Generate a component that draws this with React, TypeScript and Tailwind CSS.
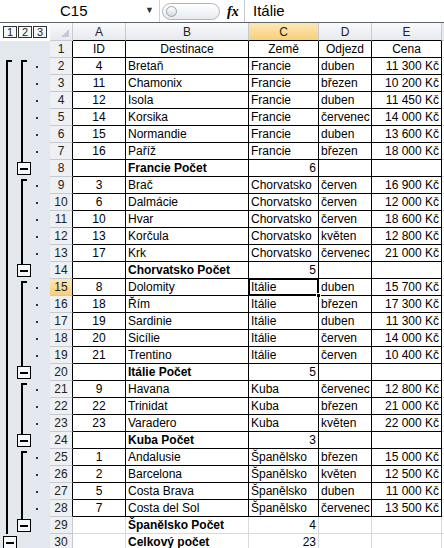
import React from 'react';

type Kind = 'head' | 'detail' | 'summary' | 'total';

type Row = {
  n: number;
  kind: Kind;
  id?: string;
  dest?: string;
  land?: string;
  month?: string;
  price?: string;
  count?: string;
};

const rows: Row[] = [
  { n: 1, kind: 'head' },
  { n: 2, kind: 'detail', id: '4', dest: 'Bretaň', land: 'Francie', month: 'duben', price: '11 300 Kč' },
  { n: 3, kind: 'detail', id: '11', dest: 'Chamonix', land: 'Francie', month: 'březen', price: '10 200 Kč' },
  { n: 4, kind: 'detail', id: '12', dest: 'Isola', land: 'Francie', month: 'duben', price: '11 450 Kč' },
  { n: 5, kind: 'detail', id: '14', dest: 'Korsika', land: 'Francie', month: 'červenec', price: '14 000 Kč' },
  { n: 6, kind: 'detail', id: '15', dest: 'Normandie', land: 'Francie', month: 'duben', price: '13 600 Kč' },
  { n: 7, kind: 'detail', id: '16', dest: 'Paříž', land: 'Francie', month: 'březen', price: '18 000 Kč' },
  { n: 8, kind: 'summary', dest: 'Francie Počet', count: '6' },
  { n: 9, kind: 'detail', id: '3', dest: 'Brač', land: 'Chorvatsko', month: 'červen', price: '16 900 Kč' },
  { n: 10, kind: 'detail', id: '6', dest: 'Dalmácie', land: 'Chorvatsko', month: 'červen', price: '12 000 Kč' },
  { n: 11, kind: 'detail', id: '10', dest: 'Hvar', land: 'Chorvatsko', month: 'červen', price: '18 600 Kč' },
  { n: 12, kind: 'detail', id: '13', dest: 'Korčula', land: 'Chorvatsko', month: 'květen', price: '12 800 Kč' },
  { n: 13, kind: 'detail', id: '17', dest: 'Krk', land: 'Chorvatsko', month: 'červenec', price: '21 000 Kč' },
  { n: 14, kind: 'summary', dest: 'Chorvatsko Počet', count: '5' },
  { n: 15, kind: 'detail', id: '8', dest: 'Dolomity', land: 'Itálie', month: 'duben', price: '15 700 Kč' },
  { n: 16, kind: 'detail', id: '18', dest: 'Řím', land: 'Itálie', month: 'březen', price: '17 300 Kč' },
  { n: 17, kind: 'detail', id: '19', dest: 'Sardinie', land: 'Itálie', month: 'duben', price: '11 300 Kč' },
  { n: 18, kind: 'detail', id: '20', dest: 'Sicílie', land: 'Itálie', month: 'červen', price: '14 000 Kč' },
  { n: 19, kind: 'detail', id: '21', dest: 'Trentino', land: 'Itálie', month: 'červen', price: '10 400 Kč' },
  { n: 20, kind: 'summary', dest: 'Itálie Počet', count: '5' },
  { n: 21, kind: 'detail', id: '9', dest: 'Havana', land: 'Kuba', month: 'červenec', price: '12 800 Kč' },
  { n: 22, kind: 'detail', id: '22', dest: 'Trinidat', land: 'Kuba', month: 'březen', price: '21 000 Kč' },
  { n: 23, kind: 'detail', id: '23', dest: 'Varadero', land: 'Kuba', month: 'květen', price: '22 000 Kč' },
  { n: 24, kind: 'summary', dest: 'Kuba Počet', count: '3' },
  { n: 25, kind: 'detail', id: '1', dest: 'Andalusie', land: 'Španělsko', month: 'březen', price: '15 000 Kč' },
  { n: 26, kind: 'detail', id: '2', dest: 'Barcelona', land: 'Španělsko', month: 'květen', price: '12 500 Kč' },
  { n: 27, kind: 'detail', id: '5', dest: 'Costa Brava', land: 'Španělsko', month: 'duben', price: '11 000 Kč' },
  { n: 28, kind: 'detail', id: '7', dest: 'Costa del Sol', land: 'Španělsko', month: 'červenec', price: '13 500 Kč' },
  { n: 29, kind: 'summary', dest: 'Španělsko Počet', count: '4' },
  { n: 30, kind: 'total', dest: 'Celkový počet', count: '23' },
];

const groupStarts = [2, 9, 15, 21, 25];

// outline symbols for one row of the gutter
function Outline({ row }: { row: Row }) {
  const n = row.n;
  const l1 = n === 1 ? null : n === 2 ? 'start' : n === 30 ? 'box' : 'line';
  const l2 =
    row.kind === 'detail' ? (groupStarts.includes(n) ? 'start' : 'line') : row.kind === 'summary' ? 'box' : null;

  const seg = (x: number, kind: string | null, bx: number) => {
    if (!kind) return null;
    if (kind === 'start')
      return (
        <g>
          <rect x={x} y={2} width={2} height={15} fill="#000" />
          <rect x={x} y={2} width={6} height={2} fill="#000" />
        </g>
      );
    if (kind === 'line') return <rect x={x} y={0} width={2} height={17} fill="#000" />;
    return (
      <g>
        {bx > 10 && <rect x={x} y={0} width={2} height={2} fill="#000" />}
        <rect x={bx + 0.5} y={2.5} width={13} height={12} fill="#f5f7fa" stroke="#000" />
        <rect x={bx + 3} y={8} width={8} height={2} fill="#000" />
      </g>
    );
  };

  return (
    <svg width="50" height="17" className="block shrink-0">
      {seg(6, l1, 3)}
      {seg(21, l2, 17)}
      {row.kind === 'detail' && <rect x={36} y={8} width={2} height={2} fill="#333" />}
    </svg>
  );
}

function ColHead({ label, w, active }: { label: string; w: string; active?: boolean }) {
  return (
    <div
      className={`${w} flex shrink-0 items-center justify-center border-r border-b border-r-[#c5cad2] border-b-black ${
        active ? 'bg-gradient-to-b from-[#fde9b4] to-[#f7cf79]' : 'bg-gradient-to-b from-[#f9fafb] to-[#e6e9ee]'
      }`}
    >
      {label}
    </div>
  );
}

export default function App() {
  return (
    <div
      className="flex h-[548px] w-[444px] flex-col overflow-hidden bg-white text-[12px] text-black"
      style={{ fontFamily: '"Liberation Sans", Arial, sans-serif' }}
    >
      {/* formula bar */}
      <div className="flex h-[22px] shrink-0 items-center bg-white">
        <div className="relative flex h-full w-[160px] items-center border-r border-[#d0d4da]">
          <span className="ml-[60px] text-[15px]">C15</span>
          <span className="absolute right-[5px] top-[4px] text-[9px] text-[#333]">▼</span>
        </div>
        <div className="ml-[2px] flex h-[17px] w-[58px] items-center rounded-full border border-[#aeb4bd] bg-gradient-to-b from-white to-[#e8ebef] px-[3px]">
          <div className="h-[11px] w-[11px] rounded-full border border-[#9aa1ab] bg-gradient-to-b from-white to-[#d6dae0]" />
        </div>
        <div className="ml-[7px] flex h-full w-[18px] items-center border-r border-[#c5cad2]">
          <span
            className="text-[14px] font-bold italic"
            style={{ fontFamily: '"Liberation Serif", serif' }}
          >
            fx
          </span>
        </div>
        <span className="ml-[8px] text-[15px]">Itálie</span>
      </div>
      <div className="h-px shrink-0 bg-[#5f6368]" />

      {/* column header row */}
      <div className="flex h-[18px] shrink-0 text-[#222]">
        <div className="flex w-[50px] shrink-0 items-start gap-px bg-white pl-[3px] pt-[3px]">
          {['1', '2', '3'].map((l) => (
            <div
              key={l}
              className="flex h-[12px] w-[14px] items-center justify-center border border-[#333] bg-[#f7f8fa] text-[11px] leading-none"
            >
              {l}
            </div>
          ))}
        </div>
        <div className="relative w-[23px] shrink-0 border-r border-b border-[#c5cad2] bg-gradient-to-b from-[#f9fafb] to-[#e6e9ee]">
          <svg width="8" height="8" className="absolute bottom-[3px] right-[3px]">
            <polygon points="8,0 8,8 0,8" fill="#c4c9d0" />
          </svg>
        </div>
        <ColHead label="A" w="w-[53px]" />
        <ColHead label="B" w="w-[123px]" />
        <ColHead label="C" w="w-[70px]" active />
        <ColHead label="D" w="w-[53px]" />
        <ColHead label="E" w="w-[70px]" />
        <div className="flex-1 border-b border-[#c5cad2] bg-[#e6e9ee]" />
      </div>

      {/* rows */}
      <div className="flex flex-col">
        {rows.map((r) => {
          const inTable = r.n <= 28;
          const bc = inTable ? 'border-black' : 'border-[#d6dae0]';
          const cell = `flex h-full shrink-0 items-center border-r border-b ${bc} overflow-hidden whitespace-nowrap`;
          const sel = r.n === 15;
          return (
            <div key={r.n} className="flex h-[17px] shrink-0">
              <div className="w-[50px] shrink-0 bg-[#e3e7ee]">
                <Outline row={r} />
              </div>
              <div
                className={`flex h-full w-[23px] shrink-0 items-center justify-center border-b border-r border-b-[#c5cad2] ${
                  inTable ? 'border-r-black' : 'border-r-[#c5cad2]'
                } ${sel ? 'bg-gradient-to-b from-[#fde9b4] to-[#f7cf79]' : 'bg-[#eef0f3]'} text-[#222]`}
              >
                {r.n}
              </div>
              {r.kind === 'head' ? (
                <>
                  <div className={`${cell} w-[53px] justify-center`}>ID</div>
                  <div className={`${cell} w-[123px] justify-center`}>Destinace</div>
                  <div className={`${cell} w-[70px] justify-center`}>Země</div>
                  <div className={`${cell} w-[53px] justify-center`}>Odjezd</div>
                  <div className={`${cell} w-[70px] justify-center`}>Cena</div>
                </>
              ) : r.kind === 'detail' ? (
                <>
                  <div className={`${cell} w-[53px] justify-center`}>{r.id}</div>
                  <div className={`${cell} w-[123px] pl-[2px]`}>{r.dest}</div>
                  <div className={`${cell} relative w-[70px] overflow-visible pl-[2px]`}>
                    {r.land}
                    {sel && (
                      <>
                        <div className="absolute -left-px -top-px bottom-[-1px] right-[-1px] border-2 border-black" />
                        <div className="absolute -bottom-[3px] -right-[3px] h-[5px] w-[5px] border border-white bg-black" />
                      </>
                    )}
                  </div>
                  <div className={`${cell} w-[53px] pl-[2px]`}>{r.month}</div>
                  <div className={`${cell} w-[70px] justify-end pr-[2px]`}>{r.price}</div>
                </>
              ) : (
                <>
                  <div className={`${cell} w-[53px]`} />
                  <div className={`${cell} w-[123px] pl-[2px] font-bold`}>{r.dest}</div>
                  <div className={`${cell} w-[70px] justify-end pr-[2px]`}>{r.count}</div>
                  <div className={`${cell} w-[53px]`} />
                  <div className={`${cell} w-[70px]`} />
                </>
              )}
              <div className="flex-1 border-b border-[#d6dae0]" />
            </div>
          );
        })}
      </div>
    </div>
  );
}
